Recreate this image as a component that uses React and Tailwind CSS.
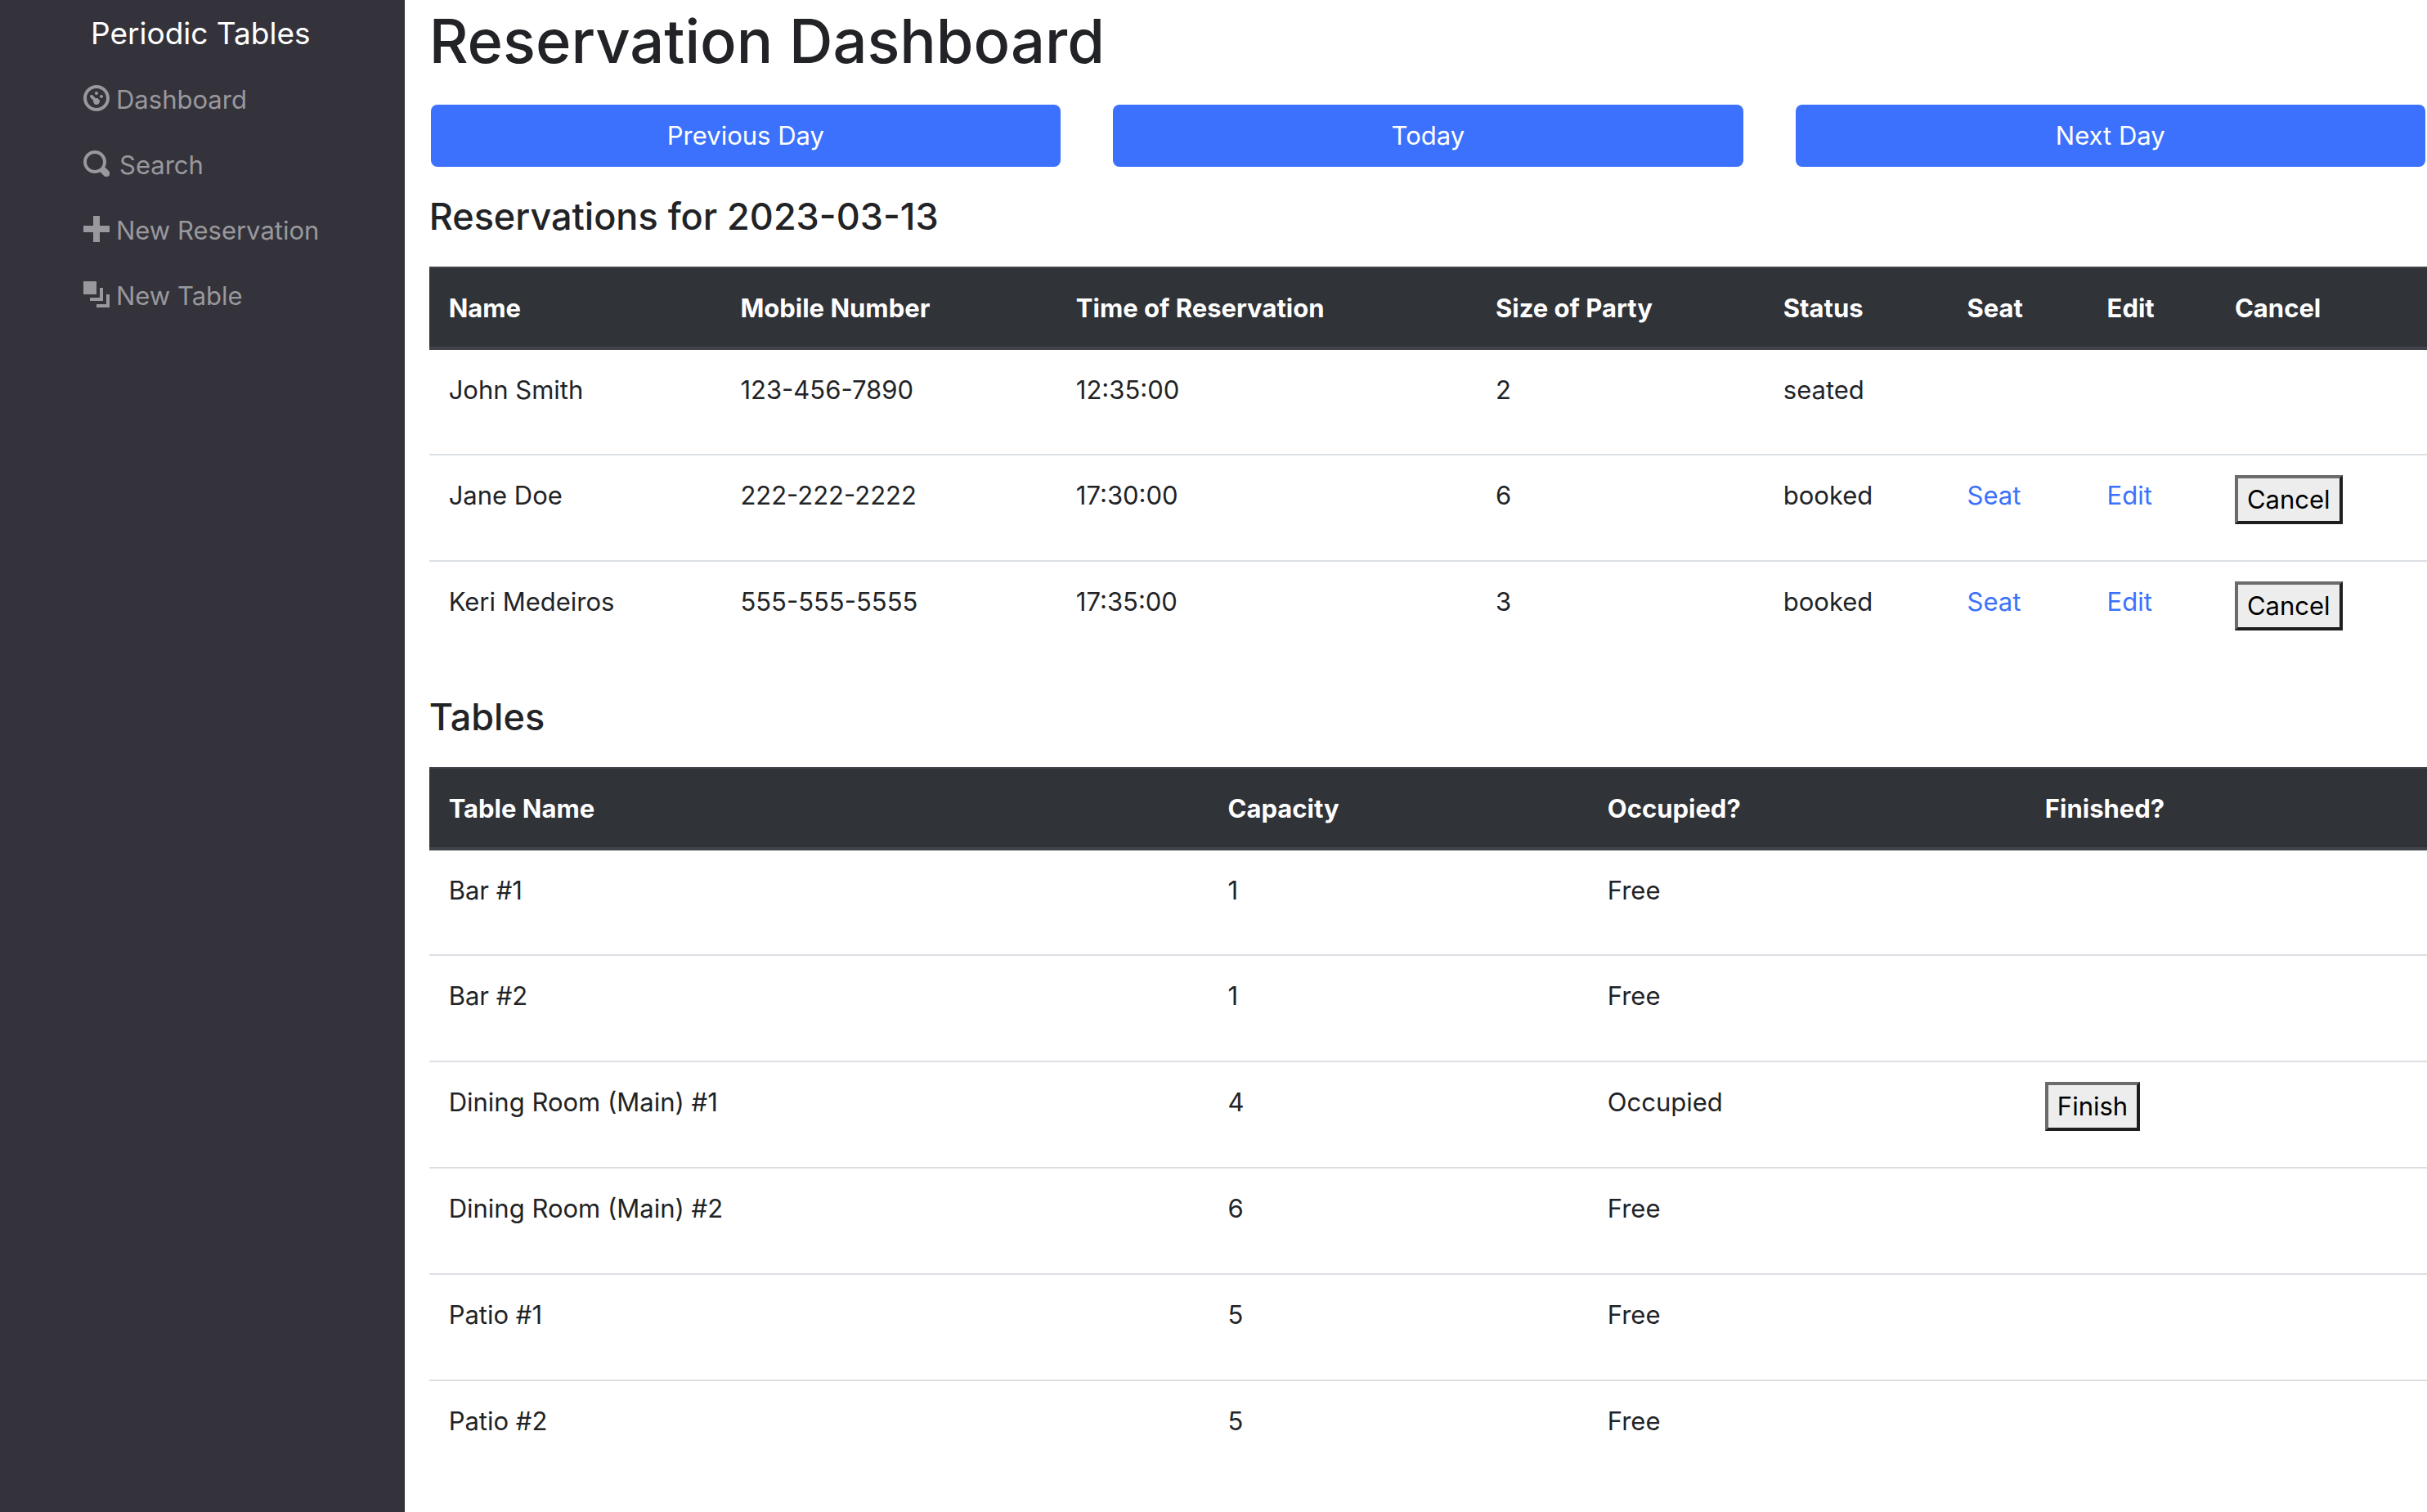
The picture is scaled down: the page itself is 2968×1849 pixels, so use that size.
import React from "react";

const ICONS = {
  dashboard:
    "M4 0c-2.2 0-4 1.8-4 4s1.8 4 4 4 4-1.8 4-4-1.8-4-4-4zm0 1c1.66 0 3 1.34 3 3s-1.34 3-3 3-3-1.34-3-3 1.34-3 3-3zm0 1c-.28 0-.5.22-.5.5s.22.5.5.5.5-.22.5-.5-.22-.5-.5-.5zm-1.66 1a.5.5 0 0 0-.19.84l.91.91c-.02.08-.06.16-.06.25 0 .55.45 1 1 1s1-.45 1-1-.45-1-1-1c-.09 0-.17.04-.25.06l-.91-.91a.5.5 0 0 0-.44-.16.5.5 0 0 0-.06 0zm3.16 0c-.28 0-.5.22-.5.5s.22.5.5.5.5-.22.5-.5-.22-.5-.5-.5z",
  search:
    "M3.5 0c-1.93 0-3.5 1.57-3.5 3.5s1.57 3.5 3.5 3.5c.59 0 1.17-.14 1.66-.41a1 1 0 0 0 .13.13l1 1a1.02 1.02 0 1 0 1.44-1.44l-1-1a1 1 0 0 0-.16-.13c.27-.49.44-1.06.44-1.66 0-1.93-1.55-3.5-3.5-3.5zm0 1c1.39 0 2.5 1.11 2.5 2.5 0 .66-.24 1.27-.66 1.72-.01.01-.02.02-.03.03a1 1 0 0 0-.13.13c-.44.4-1.04.63-1.69.63-1.39 0-2.5-1.11-2.5-2.5s1.11-2.5 2.5-2.5z",
  plus: "M3 0v3h-3v2h3v3h2v-3h3v-2h-3v-3h-2z",
  layers: "M0 0v4h4v-4h-4zm5 2v3h-3v1h4v-4h-1zm2 2v3h-3v1h4v-4h-1z",
};

const NAV = [
  { label: "Dashboard", icon: "dashboard", gap: "gap-2" },
  { label: "Search", icon: "search", gap: "gap-3" },
  { label: "New Reservation", icon: "plus", gap: "gap-2" },
  { label: "New Table", icon: "layers", gap: "gap-2" },
];

const RESERVATIONS = [
  ["John Smith", "123-456-7890", "12:35:00", "2", "seated"],
  ["Jane Doe", "222-222-2222", "17:30:00", "6", "booked"],
  ["Keri Medeiros", "555-555-5555", "17:35:00", "3", "booked"],
];

const TABLES = [
  ["Bar #1", "1", "Free"],
  ["Bar #2", "1", "Free"],
  ["Dining Room (Main) #1", "4", "Occupied"],
  ["Dining Room (Main) #2", "6", "Free"],
  ["Patio #1", "5", "Free"],
  ["Patio #2", "5", "Free"],
];

function Sidebar() {
  return (
    <nav className="w-1/6 shrink-0 bg-[#34333b]">
      <a href="#home" className="block pt-4 pl-[111px] text-[37px] leading-[50px] text-white whitespace-nowrap">
        Periodic Tables
      </a>
      <ul className="mt-4">
        {NAV.map((item) => (
          <li key={item.label}>
            <a
              href={"#" + item.icon}
              className={"flex h-20 items-center pl-[102px] whitespace-nowrap text-[#99989d] " + item.gap}
            >
              <svg viewBox="0 0 8 8" className="mb-1 size-8 shrink-0" fill="currentColor" aria-hidden="true">
                <path d={ICONS[item.icon]} />
              </svg>
              {item.label}
            </a>
          </li>
        ))}
      </ul>
    </nav>
  );
}

function Head({ columns }) {
  return (
    <thead className="bg-[#303338] text-white">
      <tr className="border-t-2 border-b-4 border-[#41454b]">
        {columns.map(([label, width]) => (
          <th key={label} scope="col" className={"px-6 pt-6 pb-[22px] text-left font-bold whitespace-nowrap " + width}>
            {label}
          </th>
        ))}
      </tr>
    </thead>
  );
}

function Cell({ children }) {
  return <td className="px-6 pt-6 align-top whitespace-nowrap">{children}</td>;
}

function ActionButton({ children }) {
  return (
    <button
      type="button"
      className="block border-4 border-t-[#6b6b6b] border-l-[#6b6b6b] border-r-[#1e1e1e] border-b-[#1e1e1e] bg-[#ededed] px-[11px] leading-[52px] text-black"
    >
      {children}
    </button>
  );
}

function TextLink({ href, children }) {
  return (
    <a href={href} className="text-[#3b71fc]">
      {children}
    </a>
  );
}

const ROW = "h-[130px] border-t-2 border-[#dbdfe4] first:border-t-0";

export default function App() {
  return (
    <div className="flex min-h-screen bg-white font-['Inter',sans-serif] text-[31px] leading-[50px] text-[#212326]">
      <Sidebar />
      <main className="min-w-0 flex-1 pl-[30px]">
        <h1 className="pt-0.5 text-[74px] leading-[96px] font-medium">Reservation Dashboard</h1>
        <div className="mt-[30px] grid grid-cols-3 gap-16 px-0.5 text-white">
          {["Previous Day", "Today", "Next Day"].map((label) => (
            <button key={label} type="button" className="h-[76px] rounded-lg bg-[#3b71fc]">
              {label}
            </button>
          ))}
        </div>
        <h2 className="mt-8 text-[45px] leading-[58px] font-medium">Reservations for 2023-03-13</h2>
        <table className="mt-8 w-full table-fixed border-collapse">
          <Head
            columns={[
              ["Name", "w-[14.6%]"],
              ["Mobile Number", "w-[16.8%]"],
              ["Time of Reservation", "w-[21%]"],
              ["Size of Party", "w-[14.4%]"],
              ["Status", "w-[9.2%]"],
              ["Seat", "w-[7%]"],
              ["Edit", "w-[6.4%]"],
              ["Cancel", ""],
            ]}
          />
          <tbody>
            {RESERVATIONS.map((row) => {
              const booked = row[4] === "booked";
              return (
                <tr key={row[0]} className={ROW}>
                  {row.map((value, i) => (
                    <Cell key={i}>{value}</Cell>
                  ))}
                  <Cell>{booked && <TextLink href="#seat">Seat</TextLink>}</Cell>
                  <Cell>{booked && <TextLink href="#edit">Edit</TextLink>}</Cell>
                  <Cell>{booked && <ActionButton>Cancel</ActionButton>}</Cell>
                </tr>
              );
            })}
          </tbody>
        </table>
        <h2 className="mt-8 text-[45px] leading-[58px] font-medium">Tables</h2>
        <table className="mt-8 w-full table-fixed border-collapse">
          <Head
            columns={[
              ["Table Name", "w-[39%]"],
              ["Capacity", "w-[19%]"],
              ["Occupied?", "w-[21.9%]"],
              ["Finished?", ""],
            ]}
          />
          <tbody>
            {TABLES.map((row) => (
              <tr key={row[0]} className={ROW}>
                {row.map((value, i) => (
                  <Cell key={i}>{value}</Cell>
                ))}
                <Cell>{row[2] === "Occupied" && <ActionButton>Finish</ActionButton>}</Cell>
              </tr>
            ))}
          </tbody>
        </table>
      </main>
    </div>
  );
}
